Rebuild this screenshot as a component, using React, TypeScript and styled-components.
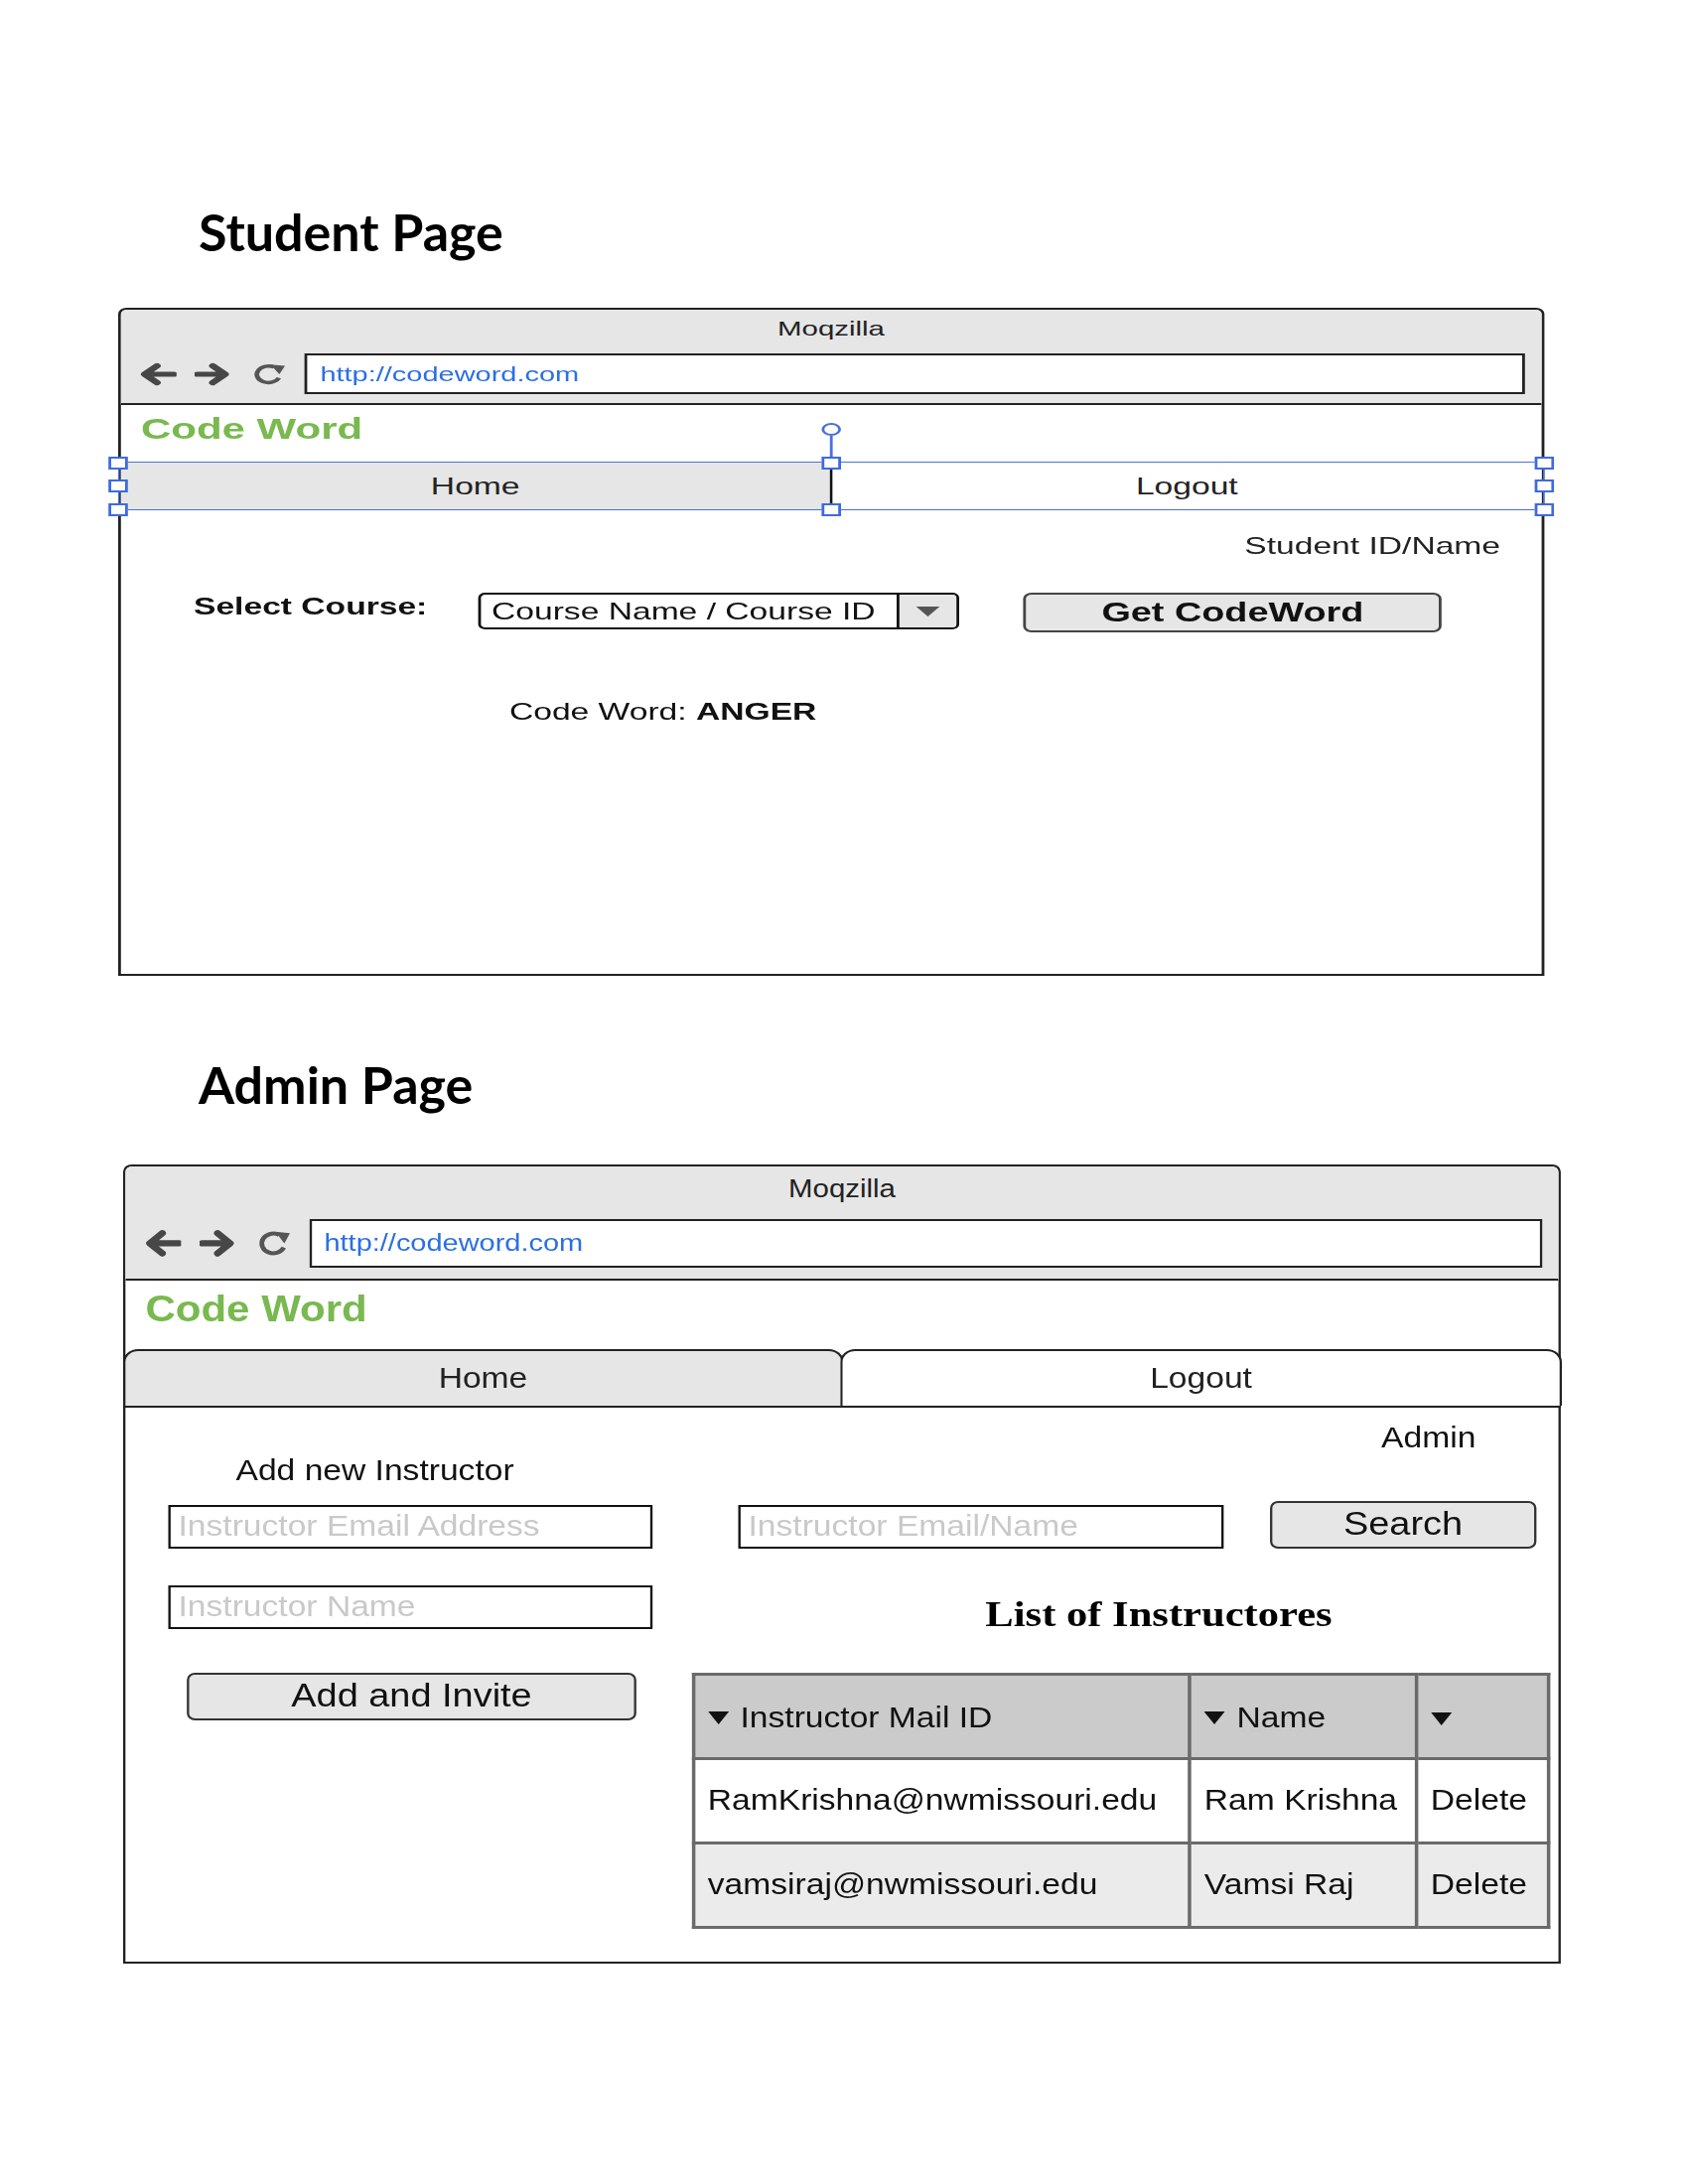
import React from "react";
import styled, { createGlobalStyle } from "styled-components";

const GlobalStyle = createGlobalStyle`
  html, body { margin: 0; padding: 0; background: #ffffff; }
  body { font-family: "Liberation Sans", Arial, sans-serif; color: #111; }
  *, *::before, *::after { box-sizing: border-box; }
`;

const Page = styled.main`
  width: 1700px;
  height: 2200px;
  padding-top: 203px;
  display: flex;
  flex-direction: column;
  align-items: flex-start;
`;

const PageHeading = styled.h1<{ $gap: number }>`
  margin: ${(p) => p.$gap}px 0 0 200px;
  height: 60px;
  font-family: Lato, "Open Sans", sans-serif;
  font-size: 52px;
  line-height: 60px;
  font-weight: 700;
  color: #000;
`;

const WindowSlot = styled.section<{ $gap: number; $left: number; $w: number; $h: number }>`
  margin: ${(p) => p.$gap}px 0 0 ${(p) => p.$left}px;
  width: ${(p) => p.$w}px;
  height: ${(p) => p.$h}px;
`;

/* The mock-up picture is stretched horizontally: the window is laid out at its
   natural width and widened with scaleX, as in the reference. */
const Window = styled.div<{ $w: number; $k: number; $s: number }>`
  width: ${(p) => p.$w / p.$k}px;
  height: 100%;
  transform: scaleX(${(p) => p.$k});
  transform-origin: 0 0;
  border: ${(p) => 2 * p.$s}px solid #222;
  border-radius: ${(p) => 6 * p.$s}px ${(p) => 6 * p.$s}px 0 0;
  background: #fff;
  display: flex;
  flex-direction: column;
`;

const TitleBar = styled.header<{ $s: number }>`
  background: #e6e6e6;
  border-bottom: ${(p) => 2 * p.$s}px solid #222;
  border-radius: ${(p) => 5 * p.$s}px ${(p) => 5 * p.$s}px 0 0;
  padding-bottom: ${(p) => 9 * p.$s}px;
  display: flex;
  flex-direction: column;
`;

const WindowTitle = styled.div<{ $s: number }>`
  height: ${(p) => 38 * p.$s}px;
  line-height: ${(p) => 38 * p.$s}px;
  text-align: center;
  font-size: ${(p) => 21 * p.$s}px;
  color: #222;
`;

const AddressRow = styled.div<{ $s: number }>`
  display: flex;
  align-items: center;
  height: ${(p) => 41 * p.$s}px;
  margin-top: ${(p) => 6 * p.$s}px;
  padding: 0 ${(p) => 12 * p.$s}px 0 ${(p) => 12.3 * p.$s}px;
  gap: ${(p) => 13 * p.$s}px;
`;

const ToolIcon = styled.svg`
  flex: none;
  display: block;
`;

const UrlField = styled.div<{ $s: number }>`
  flex: 1;
  height: 100%;
  background: #fff;
  border: ${(p) => 2 * p.$s}px solid #222;
  padding-left: ${(p) => 9 * p.$s}px;
  display: flex;
  align-items: center;
  font-size: ${(p) => 20.7 * p.$s}px;
  color: #2c6fe3;
`;

const SiteName = styled.div<{ $s: number }>`
  height: ${(p) => 48 * p.$s}px;
  line-height: ${(p) => 48 * p.$s}px;
  padding-left: ${(p) => 14.4 * p.$s}px;
  font-size: ${(p) => 30 * p.$s}px;
  font-weight: 700;
  color: #79b94f;
`;

/* ---------- student nav (selected in the editor, with handles) ---------- */

const NavBar = styled.nav`
  position: relative;
  display: flex;
  height: 47px;
  margin-top: 10px;
`;

const NavItem = styled.div<{ $active?: boolean }>`
  flex: 1;
  display: flex;
  align-items: center;
  justify-content: center;
  background: ${(p) => (p.$active ? "#e6e6e6" : "#fff")};
  font-size: 24px;
  color: #222;
`;

const NavDivider = styled.div`
  width: 2px;
  background: #111;
`;

const SelectionBox = styled.div`
  position: absolute;
  top: -1px;
  bottom: -1px;
  left: -2px;
  right: -2px;
  border: 1.5px solid #4a70dd;
  pointer-events: none;
`;

const Handle = styled.span<{ $x: string; $y: string }>`
  position: absolute;
  left: ${(p) => p.$x};
  top: ${(p) => p.$y};
  width: 14px;
  height: 13px;
  margin: -6.5px 0 0 -7px;
  background: #fff;
  border: 2px solid #3f6ae0;
`;

const RotateStem = styled.span`
  position: absolute;
  left: 50%;
  top: -27px;
  width: 1.5px;
  height: 21px;
  margin-left: -0.75px;
  background: #4a70dd;
`;

const RotateKnob = styled.span`
  position: absolute;
  left: 50%;
  top: -40px;
  width: 14px;
  height: 13px;
  margin-left: -7px;
  border: 2px solid #4a70dd;
  border-radius: 50%;
  background: #fff;
`;

/* ---------- admin nav (tabs) ---------- */

const TabStrip = styled.nav`
  display: flex;
  height: 58.4px;
  margin: 12px -2.4px 0 -2.4px;
  border-bottom: 2.4px solid #222;
`;

const Tab = styled.div<{ $active?: boolean; $first?: boolean }>`
  flex: 1;
  margin-left: ${(p) => (p.$first ? 0 : -2.4)}px;
  display: flex;
  align-items: center;
  justify-content: center;
  background: ${(p) => (p.$active ? "#e6e6e6" : "#fff")};
  border: 2.4px solid #222;
  border-bottom: none;
  border-radius: 13px 13px 0 0;
  font-size: 28.8px;
  color: #222;
`;

/* ---------- student body ---------- */

const UserLine = styled.div`
  margin-top: 21.5px;
  padding-right: 29.4px;
  text-align: right;
  font-size: 24px;
  line-height: 30px;
  height: 30px;
  color: #222;
`;

const CourseRow = styled.div`
  display: flex;
  align-items: flex-start;
  margin-top: 32.5px;
  padding-left: 52.3px;
`;

const FieldLabel = styled.div`
  width: 205px;
  font-size: 24px;
  font-weight: 700;
  line-height: 28px;
  color: #111;
`;

const Dropdown = styled.div`
  width: 346px;
  height: 37px;
  display: flex;
  border: 2px solid #111;
  border-radius: 5px;
  overflow: hidden;
`;

const DropdownText = styled.div`
  flex: 1;
  padding-left: 7.3px;
  font-size: 24px;
  line-height: 33px;
  color: #111;
  white-space: nowrap;
`;

const DropdownButton = styled.div`
  width: 43px;
  display: flex;
  align-items: center;
  justify-content: center;
  background: #e6e6e6;
  border-left: 2px solid #111;
`;

const PrimaryButton = styled.div`
  margin-left: 45.7px;
  width: 301.4px;
  height: 40px;
  display: flex;
  align-items: center;
  justify-content: center;
  background: #e6e6e6;
  border: 2px solid #444;
  border-radius: 6px;
  font-size: 27px;
  font-weight: 700;
  color: #111;
`;

const ResultLine = styled.div`
  margin-top: 65px;
  padding-left: 279.4px;
  font-size: 24px;
  line-height: 30px;
  color: #111;
  & b {
    font-weight: 700;
  }
`;

/* ---------- admin body ---------- */

const AdminBody = styled.div`
  display: flex;
  align-items: flex-start;
  padding-top: 13px;
`;

const FormColumn = styled.div`
  width: 418.3px;
  margin-left: 37px;
  padding-top: 33px;
  display: flex;
  flex-direction: column;
  align-items: flex-start;
`;

const SectionTitle = styled.div`
  padding-left: 58.3px;
  font-size: 28.8px;
  line-height: 34px;
  color: #111;
  white-space: nowrap;
`;

const TextField = styled.input<{ $mt?: number; $w?: number }>`
  margin-top: ${(p) => p.$mt ?? 0}px;
  width: ${(p) => p.$w ?? 418.3}px;
  height: 44px;
  border: 2.4px solid #111;
  border-radius: 0;
  padding: 0 0 0 6.6px;
  font-family: "Liberation Sans", Arial, sans-serif;
  font-size: 28.8px;
  background: #fff;
  outline: none;
  &::placeholder {
    color: #c9c9c9;
    opacity: 1;
  }
`;

const ActionButton = styled.div<{ $mt?: number; $ml: number; $w: number }>`
  margin-top: ${(p) => p.$mt ?? 0}px;
  margin-left: ${(p) => p.$ml}px;
  width: ${(p) => p.$w}px;
  height: 48px;
  display: flex;
  align-items: center;
  justify-content: center;
  background: #e6e6e6;
  border: 2.4px solid #333;
  border-radius: 7px;
  font-size: 32.5px;
  color: #111;
`;

const ListColumn = styled.div`
  width: 738px;
  margin-left: 33.4px;
  display: flex;
  flex-direction: column;
`;

const AdminName = styled.div`
  padding-right: 61px;
  text-align: right;
  font-size: 28.8px;
  line-height: 34px;
  color: #111;
`;

const SearchRow = styled.div`
  display: flex;
  align-items: flex-end;
  margin-top: 47px;
  padding-left: 40.3px;
`;

const ListHeading = styled.h2`
  margin: 46px 0 0 0;
  padding-left: 68.6px;
  text-align: center;
  font-family: "Liberation Serif", "Times New Roman", serif;
  font-size: 36.5px;
  line-height: 40px;
  font-weight: 700;
  color: #000;
`;

const Grid = styled.table`
  margin-top: 39px;
  width: 738px;
  border-collapse: collapse;
  table-layout: fixed;
  font-size: 28.8px;
  color: #111;
`;

const HeadCell = styled.th<{ $w: number }>`
  width: ${(p) => p.$w}px;
  height: 85px;
  padding: 0 0 0 11px;
  background: #cbcbcb;
  border: 3px solid #6a6a6a;
  text-align: left;
  font-weight: 400;
  white-space: nowrap;
`;

const HeadLabel = styled.span`
  display: inline-flex;
  align-items: center;
  gap: 10px;
`;

const Cell = styled.td<{ $alt?: boolean }>`
  height: 85px;
  padding: 0 0 0 11px;
  background: ${(p) => (p.$alt ? "#ebebeb" : "#fff")};
  border: 3px solid #6a6a6a;
  white-space: nowrap;
`;

/* ---------- icons ---------- */

const BackIcon = ({ s }: { s: number }) => (
  <ToolIcon width={28 * s} height={24 * s} viewBox="0 0 28 24">
    <path d="M26 12H6M14 3.5 5 12l9 8.5" fill="none" stroke="#474747" strokeWidth="5.2" strokeLinecap="round" strokeLinejoin="round" />
  </ToolIcon>
);

const ForwardIcon = ({ s }: { s: number }) => (
  <ToolIcon width={27 * s} height={24 * s} viewBox="0 0 27 24">
    <path d="M2 12h19M13 3.5l9 8.5-9 8.5" fill="none" stroke="#474747" strokeWidth="5.2" strokeLinecap="round" strokeLinejoin="round" />
  </ToolIcon>
);

const ReloadIcon = ({ s }: { s: number }) => (
  <ToolIcon width={26 * s} height={24 * s} viewBox="0 0 26 24">
    <path d="M17.2 4.9A8.3 8.3 0 1 0 20.6 15.6" fill="none" stroke="#555" strokeWidth="3.4" />
    <polygon points="14.5,2.2 25,3.6 21,12" fill="#555" />
  </ToolIcon>
);

const DownTriangle = ({ w, h, color }: { w: number; h: number; color: string }) => (
  <svg width={w} height={h} viewBox={`0 0 ${w} ${h}`} style={{ display: "block", flex: "none" }}>
    <polygon points={`0,0 ${w},0 ${w / 2},${h}`} fill={color} />
  </svg>
);

/* ---------- chrome ---------- */

const BrowserChrome = ({ s }: { s: number }) => (
  <>
    <TitleBar $s={s}>
      <WindowTitle $s={s}>Moqzilla</WindowTitle>
      <AddressRow $s={s}>
        <BackIcon s={s} />
        <ForwardIcon s={s} />
        <ReloadIcon s={s} />
        <UrlField $s={s}>http://codeword.com</UrlField>
      </AddressRow>
    </TitleBar>
    <SiteName $s={s}>Code Word</SiteName>
  </>
);

const StudentWindow = () => (
  <WindowSlot $gap={47} $left={119} $w={1436} $h={673}>
    <Window $w={1436} $k={1.4} $s={1}>
      <BrowserChrome s={1} />
      <NavBar>
        <NavItem $active>Home</NavItem>
        <NavDivider />
        <NavItem>Logout</NavItem>
        <SelectionBox />
        <RotateStem />
        <RotateKnob />
        <Handle $x="-2px" $y="0" />
        <Handle $x="-2px" $y="50%" />
        <Handle $x="-2px" $y="100%" />
        <Handle $x="50%" $y="0" />
        <Handle $x="50%" $y="100%" />
        <Handle $x="calc(100% + 2px)" $y="0" />
        <Handle $x="calc(100% + 2px)" $y="50%" />
        <Handle $x="calc(100% + 2px)" $y="100%" />
      </NavBar>
      <UserLine>Student ID/Name</UserLine>
      <CourseRow>
        <FieldLabel>Select Course:</FieldLabel>
        <Dropdown>
          <DropdownText>Course Name / Course ID</DropdownText>
          <DropdownButton>
            <DownTriangle w={17} h={10} color="#555" />
          </DropdownButton>
        </Dropdown>
        <PrimaryButton>Get CodeWord</PrimaryButton>
      </CourseRow>
      <ResultLine>
        Code Word: <b>ANGER</b>
      </ResultLine>
    </Window>
  </WindowSlot>
);

const instructors = [
  { mail: "RamKrishna@nwmissouri.edu", name: "Ram Krishna" },
  { mail: "vamsiraj@nwmissouri.edu", name: "Vamsi Raj" },
];

const AdminWindow = () => (
  <WindowSlot $gap={51} $left={124} $w={1448} $h={805}>
    <Window $w={1448} $k={1.1667} $s={1.2}>
      <BrowserChrome s={1.2} />
      <TabStrip>
        <Tab $active $first>
          Home
        </Tab>
        <Tab>Logout</Tab>
      </TabStrip>
      <AdminBody>
        <FormColumn>
          <SectionTitle>Add new Instructor</SectionTitle>
          <TextField $mt={18} placeholder="Instructor Email Address" readOnly />
          <TextField $mt={37} placeholder="Instructor Name" readOnly />
          <ActionButton $mt={44} $ml={16.3} $w={387.4}>
            Add and Invite
          </ActionButton>
        </FormColumn>
        <ListColumn>
          <AdminName>Admin</AdminName>
          <SearchRow>
            <TextField $w={419.2} placeholder="Instructor Email/Name" readOnly />
            <ActionButton $ml={39.4} $w={230.6}>
              Search
            </ActionButton>
          </SearchRow>
          <ListHeading>List of Instructores</ListHeading>
          <Grid>
            <thead>
              <tr>
                <HeadCell $w={428.6}>
                  <HeadLabel>
                    <DownTriangle w={18} h={13} color="#111" />
                    Instructor Mail ID
                  </HeadLabel>
                </HeadCell>
                <HeadCell $w={195.4}>
                  <HeadLabel>
                    <DownTriangle w={18} h={13} color="#111" />
                    Name
                  </HeadLabel>
                </HeadCell>
                <HeadCell $w={114}>
                  <HeadLabel>
                    <DownTriangle w={18} h={13} color="#111" />
                  </HeadLabel>
                </HeadCell>
              </tr>
            </thead>
            <tbody>
              {instructors.map((row, i) => (
                <tr key={row.mail}>
                  <Cell $alt={i % 2 === 1}>{row.mail}</Cell>
                  <Cell $alt={i % 2 === 1}>{row.name}</Cell>
                  <Cell $alt={i % 2 === 1}>Delete</Cell>
                </tr>
              ))}
            </tbody>
          </Grid>
        </ListColumn>
      </AdminBody>
    </Window>
  </WindowSlot>
);

export default function App() {
  return (
    <>
      <GlobalStyle />
      <Page>
        <PageHeading $gap={0}>Student Page</PageHeading>
        <StudentWindow />
        <PageHeading $gap={79}>Admin Page</PageHeading>
        <AdminWindow />
      </Page>
    </>
  );
}
